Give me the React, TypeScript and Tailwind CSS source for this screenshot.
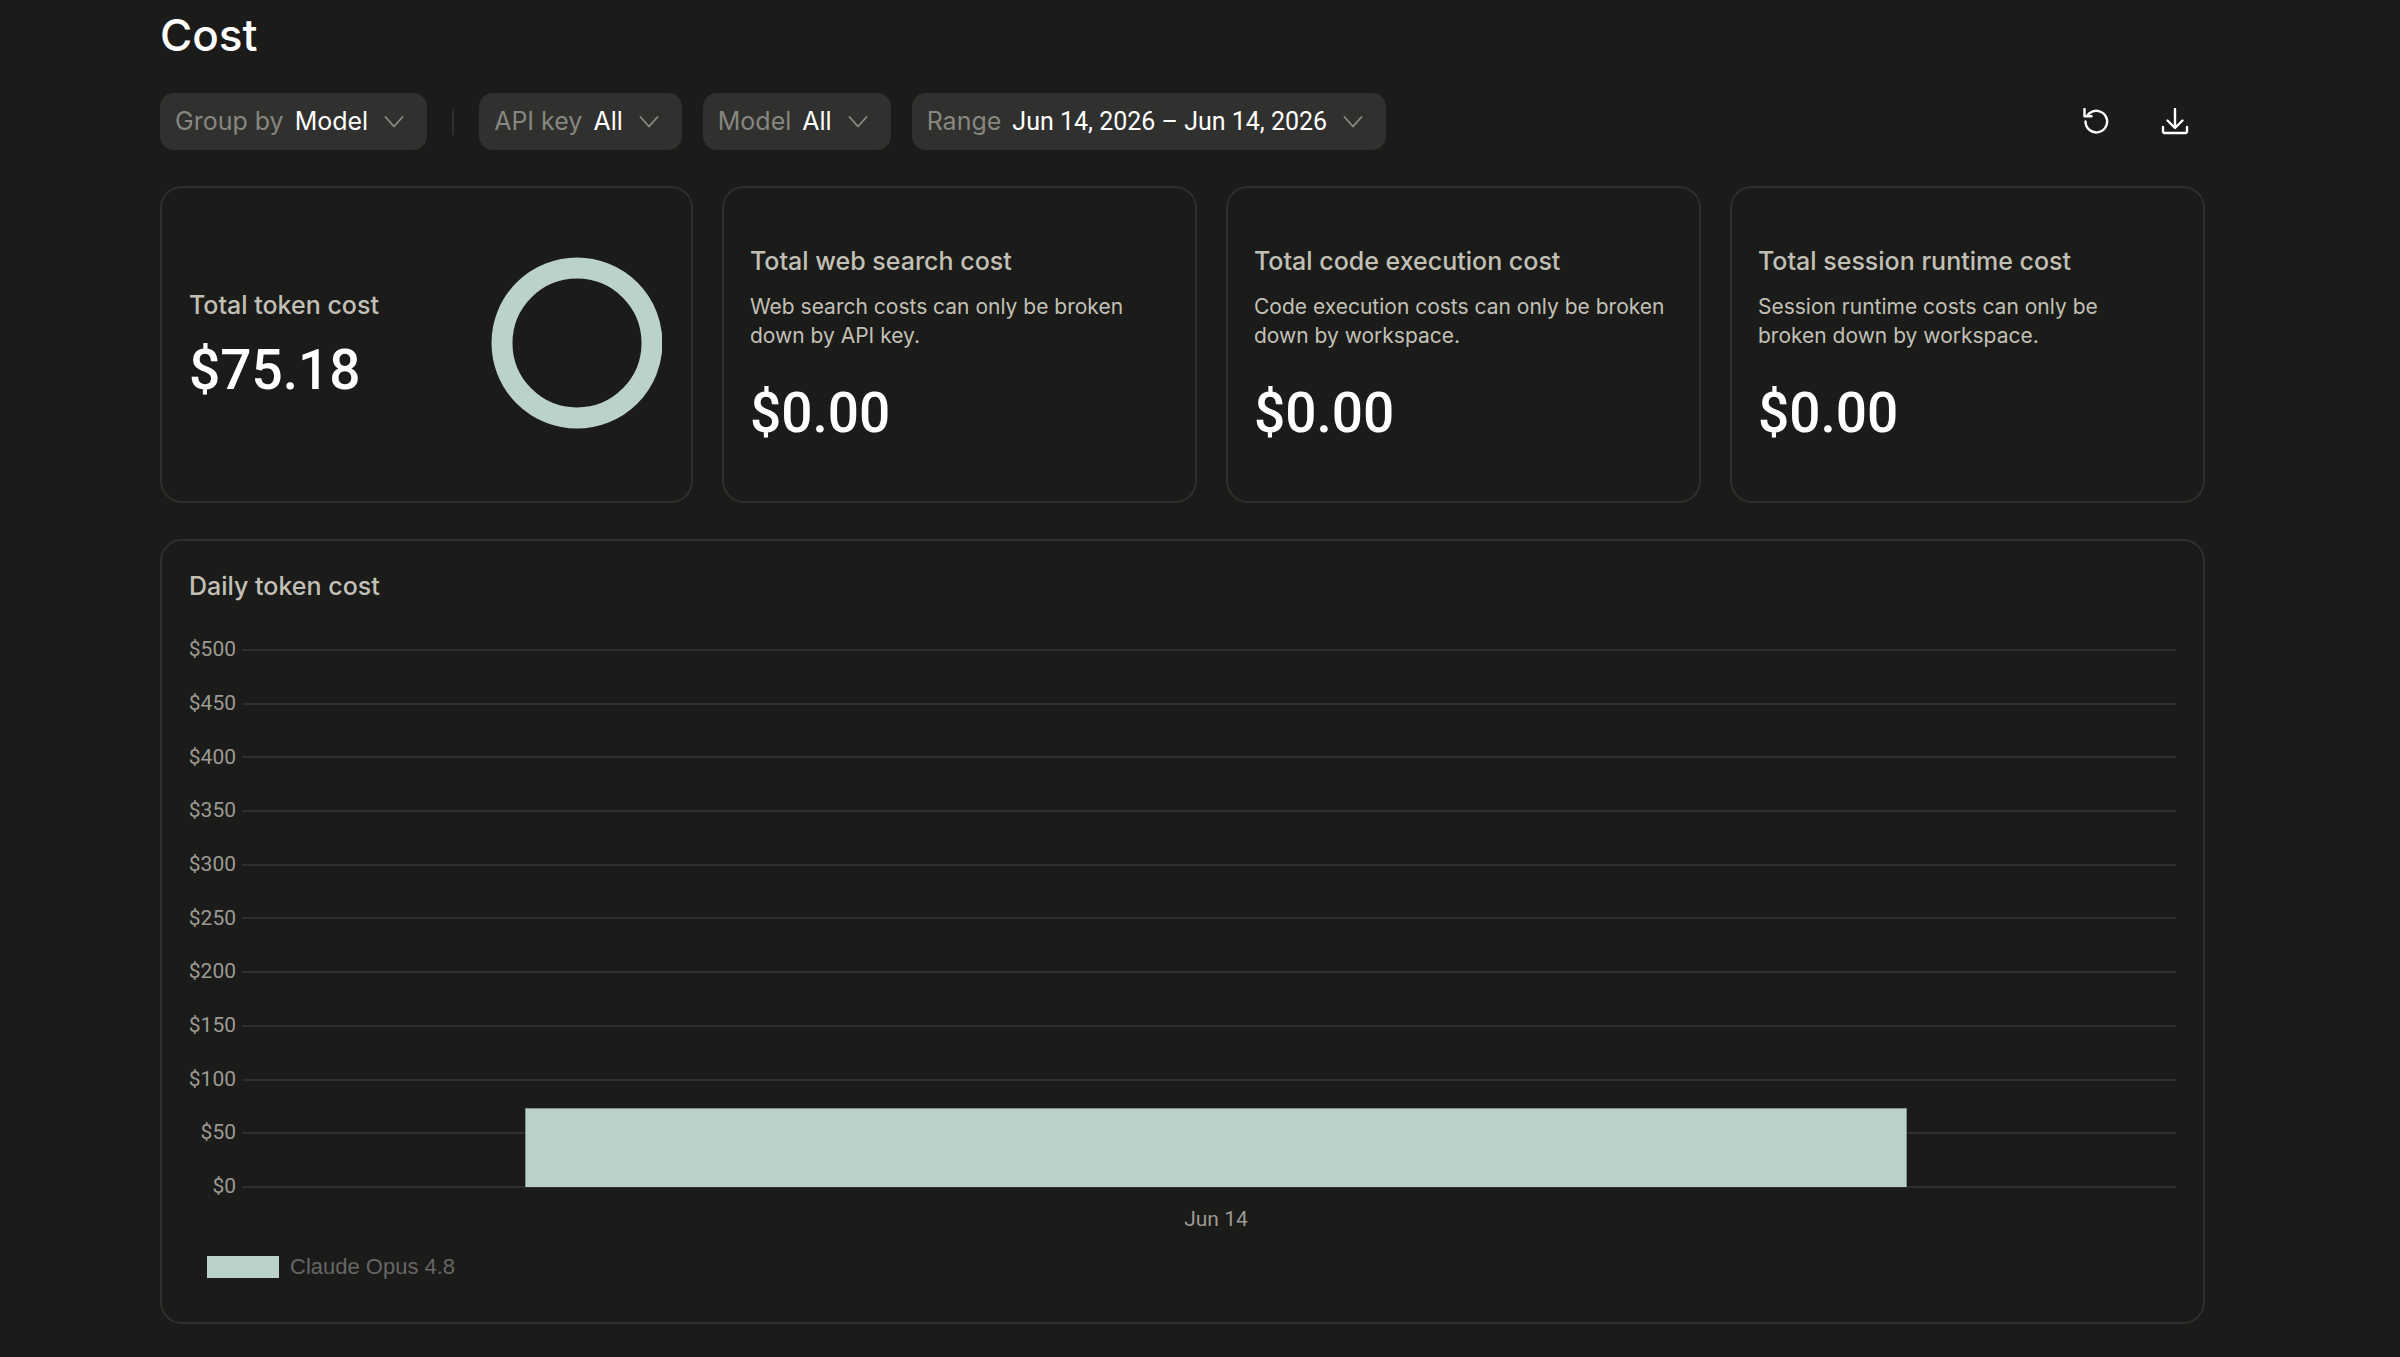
import type { ReactNode } from "react";

const MINT = "#bbd2c9";

function Chevron() {
  return (
    <svg viewBox="0 0 20 12" className="h-3 w-5 shrink-0" fill="none" stroke="#8b8a82" strokeWidth="1.800" strokeLinecap="round" strokeLinejoin="round" aria-hidden="true">
      <path d="M1.500 1l8.500 9.500 8.500-9.500" />
    </svg>
  );
}

function Filter({ label, children }: { label: string; children: ReactNode }) {
  return (
    <button type="button" className="flex h-[57px] items-center gap-[11px] rounded-[14px] bg-[#30302e] pr-[23px] pl-[15px] text-[25px]">
      <span className="text-[#87867f]">{label}</span>
      <span className="flex items-center gap-4 text-white">
        {children}
        <Chevron />
      </span>
    </button>
  );
}

function IconButton({ label, children }: { label: string; children: ReactNode }) {
  return (
    <button type="button" aria-label={label} className="flex size-14 items-center justify-center text-white">
      <svg viewBox="0 0 28 28" className="size-7" fill="none" stroke="currentColor" strokeWidth="2.4" strokeLinecap="round" strokeLinejoin="round" aria-hidden="true">
        {children}
      </svg>
    </button>
  );
}

function StatCard({ title, note, value }: { title: string; note: string; value: string }) {
  return (
    <section className="flex flex-col justify-center rounded-[22px] border-2 border-[#2f2f2d] pt-1 pr-8 pl-[26px]">
      <h2 className="text-[25px] leading-[34px] font-medium text-[#c2c0b6]">{title}</h2>
      <p className="mt-[14px] text-[21px] leading-[29px] text-[#c2c0b6]">{note}</p>
      <p className="mt-[27px] font-['Roboto',sans-serif] text-[55px] leading-[72px] font-medium text-white">{value}</p>
    </section>
  );
}

const stats = [
  { title: "Total web search cost", note: "Web search costs can only be broken down by API key.", value: "$0.00" },
  { title: "Total code execution cost", note: "Code execution costs can only be broken down by workspace.", value: "$0.00" },
  { title: "Total session runtime cost", note: "Session runtime costs can only be broken down by workspace.", value: "$0.00" },
];

const ticks = [500, 450, 400, 350, 300, 250, 200, 150, 100, 50, 0];

export default function App() {
  return (
    <main className="min-h-screen bg-[#1b1b19] pt-2 pr-[8.125%] pb-8 pl-[160px] font-['Inter',sans-serif] text-white">
      <h1 className="text-[44px] leading-[54px] font-medium">Cost</h1>

      <div className="mt-[31px] flex items-center">
        <Filter label="Group by">Model</Filter>
        <div className="mx-[25px] h-[26px] w-[2px] bg-[#30302e]" />
        <div className="flex gap-[21px]">
          <Filter label="API key">All</Filter>
          <Filter label="Model">All</Filter>
          <Filter label="Range">
            <span className="font-['Roboto',sans-serif]">Jun 14, 2026 – Jun 14, 2026</span>
          </Filter>
        </div>
        <div className="mr-[2px] ml-auto flex gap-6">
          <IconButton label="Refresh">
            <path d="M4.500 13.500A10.800 10.800 0 1 0 8.500 5.200L6.500 7.300" />
            <path d="M3.500 1v7.300h7" />
          </IconButton>
          <IconButton label="Download">
            <path d="M14 1v18.500M6.500 12.500l7.500 7.500 7.500-7.500" />
            <path d="M2 19v4.500a1.500 1.500 0 0 0 1.500 1.500h21a1.500 1.500 0 0 0 1.500-1.500v-4.500" />
          </IconButton>
        </div>
      </div>

      <div className="mt-9 grid min-h-[317px] grid-cols-[1.122fr_1fr_1fr_1fr] gap-[29px]">
        <section className="flex items-center justify-between rounded-[22px] border-2 border-[#2f2f2d] pr-[29px] pl-[27px]">
          <div className="pt-1">
            <h2 className="text-[25px] leading-[34px] font-medium text-[#c2c0b6]">Total token cost</h2>
            <p className="mt-3 font-['Roboto',sans-serif] text-[55px] leading-[72px] font-medium">$75.18</p>
          </div>
          <svg viewBox="0 0 171 172" className="mb-1 h-[172px] w-[171px]" role="img" aria-label="Token cost by model">
            <circle cx="86" cy="86" r="75" fill="none" stroke={MINT} strokeWidth="21" />
          </svg>
        </section>
        {stats.map((s) => (
          <StatCard key={s.title} {...s} />
        ))}
      </div>

      <section className="mt-9 rounded-[22px] border-2 border-[#2f2f2d] px-[27px] pt-7 pb-[39px]">
        <h2 className="text-[25px] leading-[34px] font-medium text-[#c2c0b6]">Daily token cost</h2>
        <div className="mt-[47px] flex h-[537px]">
          <div className="flex w-[47px] flex-col justify-between text-right font-['Roboto',sans-serif] text-[21px] text-[#9c9a92]">
            {ticks.map((t) => (
              <span key={t} className="flex h-0 items-center justify-end">${t}</span>
            ))}
          </div>
          <div className="relative ml-[6px] flex flex-1 flex-col justify-between">
            {ticks.map((t) => (
              <div key={t} className="flex h-0 items-center">
                <div className="h-[2px] w-full shrink-0 bg-[#2f2f2d]" />
              </div>
            ))}
            <div className="absolute inset-0 flex items-end justify-center pl-[14px]">
              <div className="w-[72%] border border-b-0 border-[#87918c] bg-[#bbd2c9]" style={{ height: `${(74 / 500) * 100}%` }} />
            </div>
          </div>
        </div>
        <p className="mt-4 pl-[67px] text-center font-['Roboto',sans-serif] text-[21px] leading-8 text-[#9c9a92]">Jun 14</p>
        <div className="mt-4 ml-[18px] flex items-center gap-[11px]">
          <span className="h-[22px] w-[72px] bg-[#bbd2c9]" />
          <span className="font-['Liberation_Sans',sans-serif] text-[22px] leading-8 text-[#666666]">Claude Opus 4.8</span>
        </div>
      </section>
    </main>
  );
}
